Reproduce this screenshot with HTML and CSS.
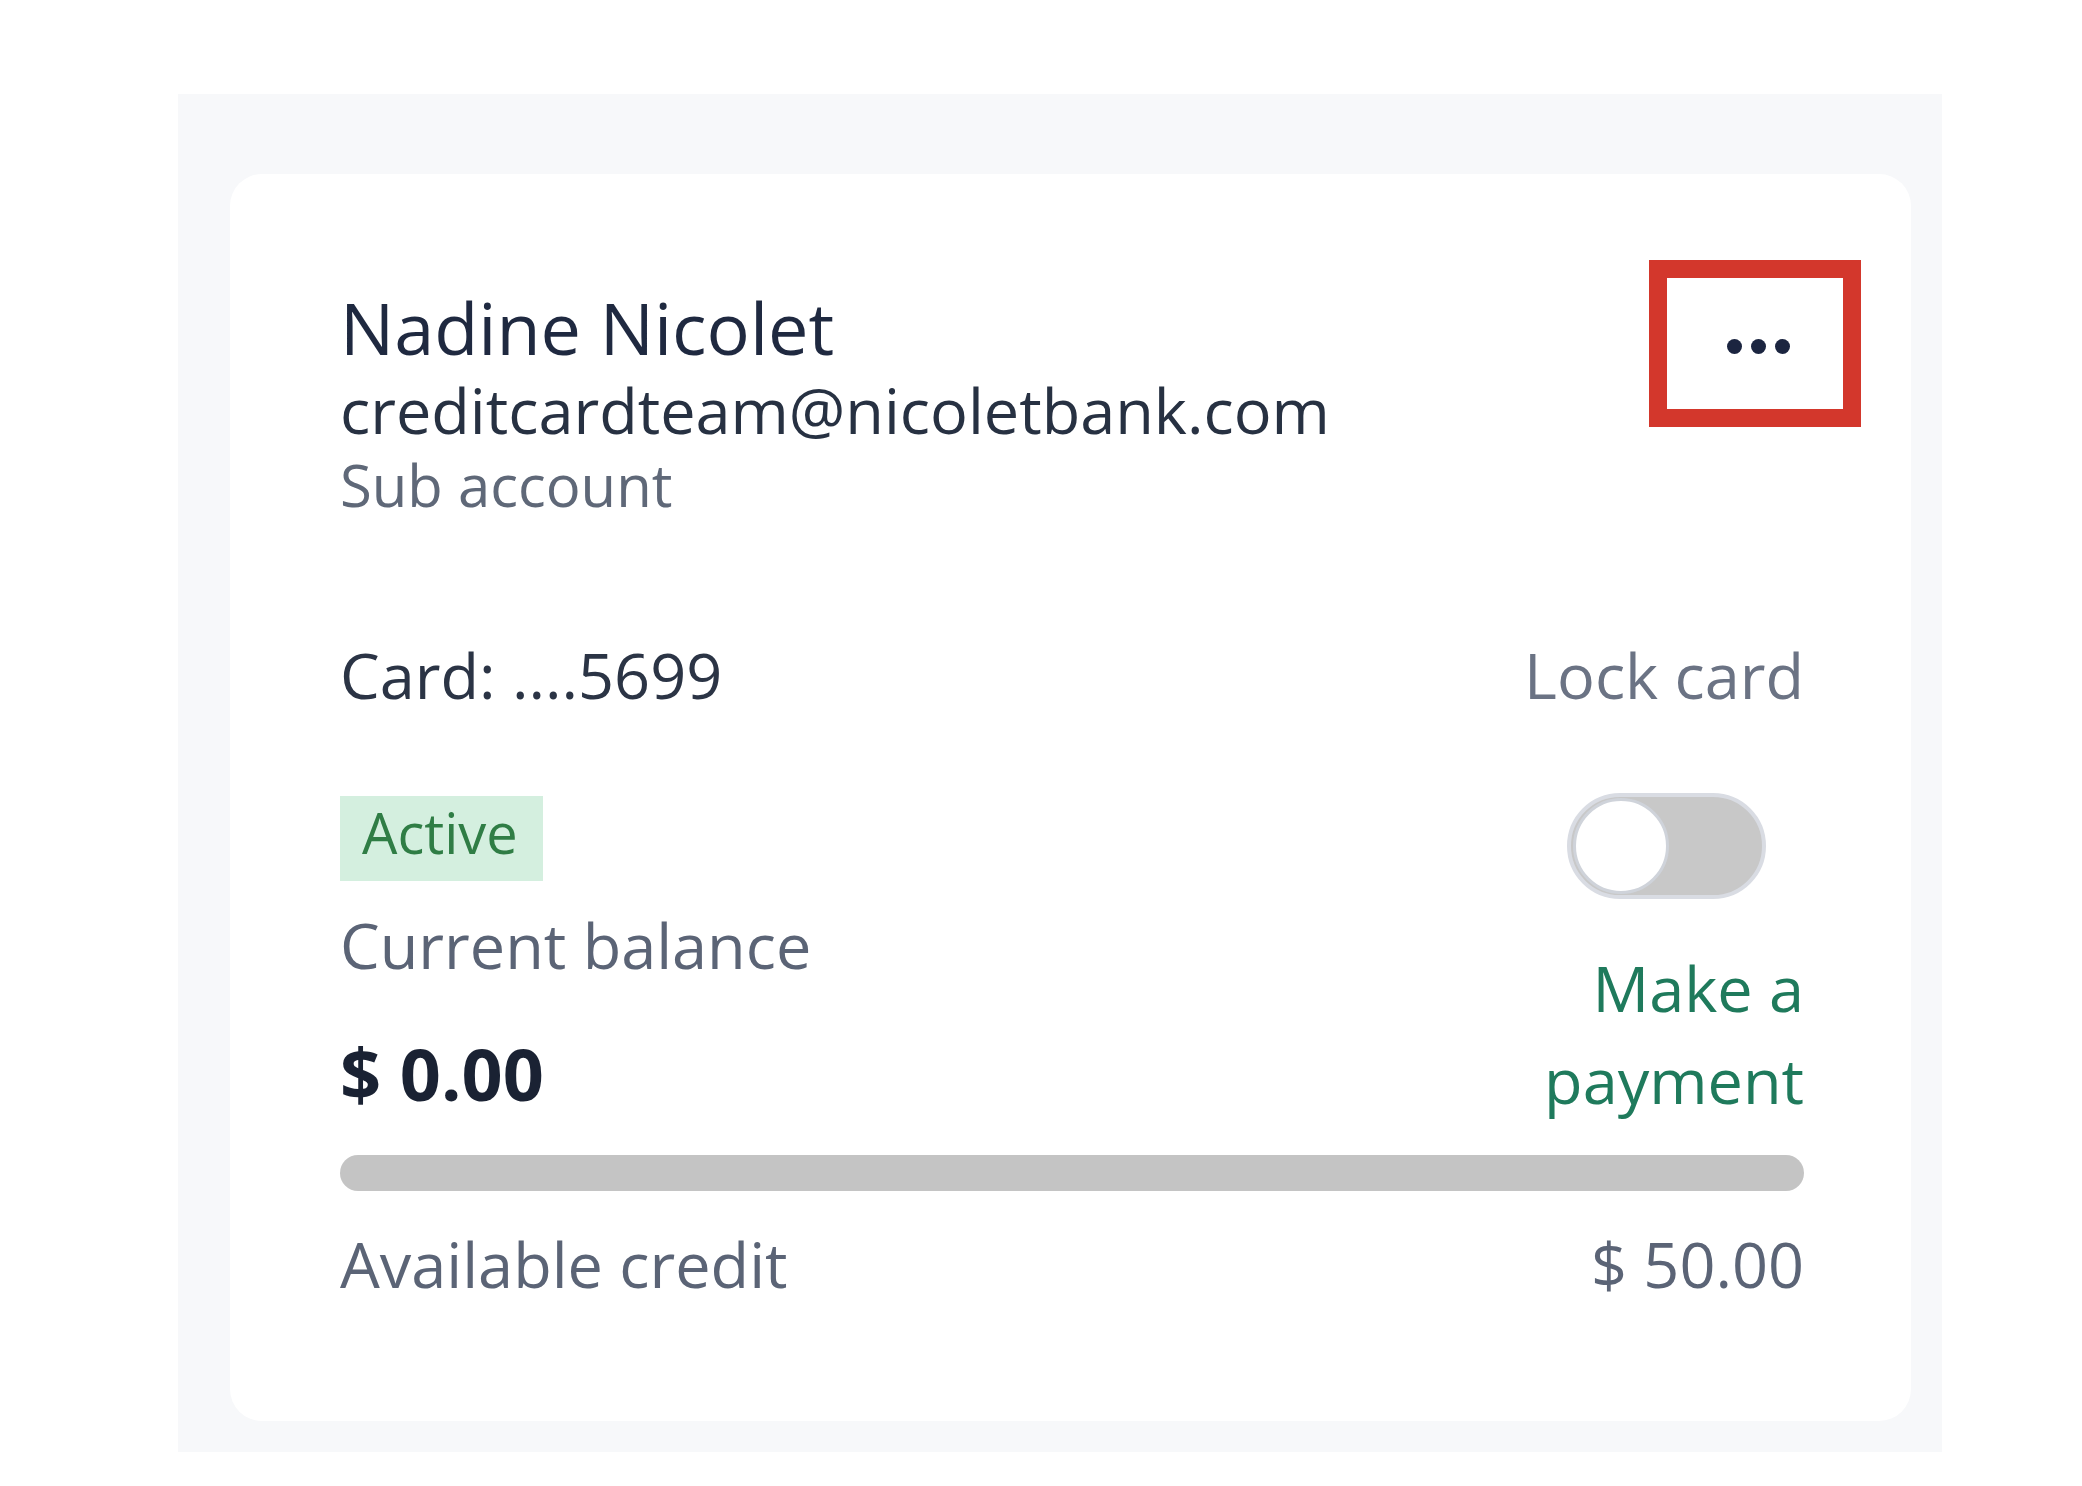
FILE: index.html
```html
<!DOCTYPE html>
<html lang="en">
<head>
    <meta charset="UTF-8">
    <title>Card holder</title>
    <link rel="stylesheet" href="styles.css">
</head>
<body>
    <div class="panel">
        <div class="card">
            <div class="card-head">
                <div class="holder">
                    <div class="holder-name">Nadine Nicolet</div>
                    <div class="holder-mail">creditcardteam@nicoletbank.com</div>
                    <div class="holder-type">Sub account</div>
                </div>
                <button class="more-btn" type="button">
                    <svg width="63" height="15" viewBox="0 0 63 15">
                        <circle cx="7.5" cy="7.5" r="7.5"/>
                        <circle cx="31.5" cy="7.5" r="7.5"/>
                        <circle cx="55.5" cy="7.5" r="7.5"/>
                    </svg>
                </button>
            </div>

            <div class="card-body">
                <div class="main">
                    <div class="card-no">Card: ....5699</div>
                    <span class="status">Active</span>
                    <div class="label">Current balance</div>
                    <div class="balance">$ 0.00</div>
                </div>
                <div class="side">
                    <div class="lock-label">Lock card</div>
                    <div class="toggle"><span class="knob"></span></div>
                    <a class="pay-link" href="#">Make a payment</a>
                </div>
            </div>

            <div class="bar"></div>

            <div class="credit">
                <span>Available credit</span>
                <span>$ 50.00</span>
            </div>
        </div>
    </div>
</body>
</html>
```

FILE: styles.css
```css
*{
    margin: 0;
    padding: 0;
    box-sizing: border-box;
}
body{
    background-color: #fff;
    font-family: "Open Sans", "Noto Sans", sans-serif;
    color: #273142;
}
.panel{
    width: 1764px;
    height: 1358px;
    margin: 94px 0 0 178px;
    padding: 80px 31px 31px 52px;
    background-color: #f7f8fa;
}
.card{
    height: 100%;
    padding: 110px 107px 0 110px;
    border-radius: 32px;
    background-color: #fff;
}
.card-head{
    display: flex;
    justify-content: space-between;
    align-items: flex-start;
}
.holder-name{
    font-size: 72px;
    line-height: 86px;
    color: #1f2940;
}
.holder-mail{
    font-size: 63px;
    line-height: 80px;
    color: #273142;
}
.holder-type{
    font-size: 58px;
    line-height: 70px;
    color: #5f6878;
}
.more-btn{
    display: flex;
    align-items: center;
    justify-content: center;
    width: 212px;
    height: 167px;
    margin: -24px -57px 0 0;
    border: 18px solid #d3372c;
    background-color: #fff;
    cursor: pointer;
}
.more-btn svg{
    fill: #1b2540;
    margin: 6px 0 0 6px;
}
.card-body{
    display: flex;
    justify-content: space-between;
    align-items: flex-start;
    margin-top: 112px;
}
.main{
    display: flex;
    flex-direction: column;
    align-items: flex-start;
}
.card-no{
    font-size: 63px;
    line-height: 86px;
    color: #2b3445;
}
.status{
    margin-top: 78px;
    padding: 0 25px 13px 22px;
    font-size: 56px;
    line-height: 72px;
    color: #2f7d45;
    background-color: #d4efdf;
}
.label{
    margin-top: 21px;
    font-size: 63px;
    line-height: 86px;
    color: #5b6476;
}
.balance{
    margin-top: 42px;
    font-size: 72px;
    font-weight: 700;
    line-height: 86px;
    color: #1a2233;
}
.side{
    display: flex;
    flex-direction: column;
    align-items: flex-end;
    width: 278px;
    text-align: right;
}
.lock-label{
    font-size: 63px;
    line-height: 86px;
    color: #6b7384;
    white-space: nowrap;
}
.toggle{
    display: flex;
    align-items: center;
    align-self: center;
    width: 199px;
    height: 106px;
    margin: 75px 0 0 2px;
    padding-left: 2px;
    border: 4px solid #d9dce3;
    border-radius: 53px;
    background-color: #c8c8c8;
}
.knob{
    width: 96px;
    height: 96px;
    border: 3px solid #cfd3da;
    border-radius: 50%;
    background-color: #fff;
}
.pay-link{
    margin-top: 43px;
    font-size: 63px;
    line-height: 92px;
    color: #1f7a5c;
    text-decoration: none;
}
.bar{
    height: 36px;
    margin-top: 29px;
    border-radius: 18px;
    background-color: #c4c4c4;
}
.credit{
    display: flex;
    justify-content: space-between;
    margin-top: 30px;
    font-size: 63px;
    line-height: 86px;
    color: #5b6476;
}
```
